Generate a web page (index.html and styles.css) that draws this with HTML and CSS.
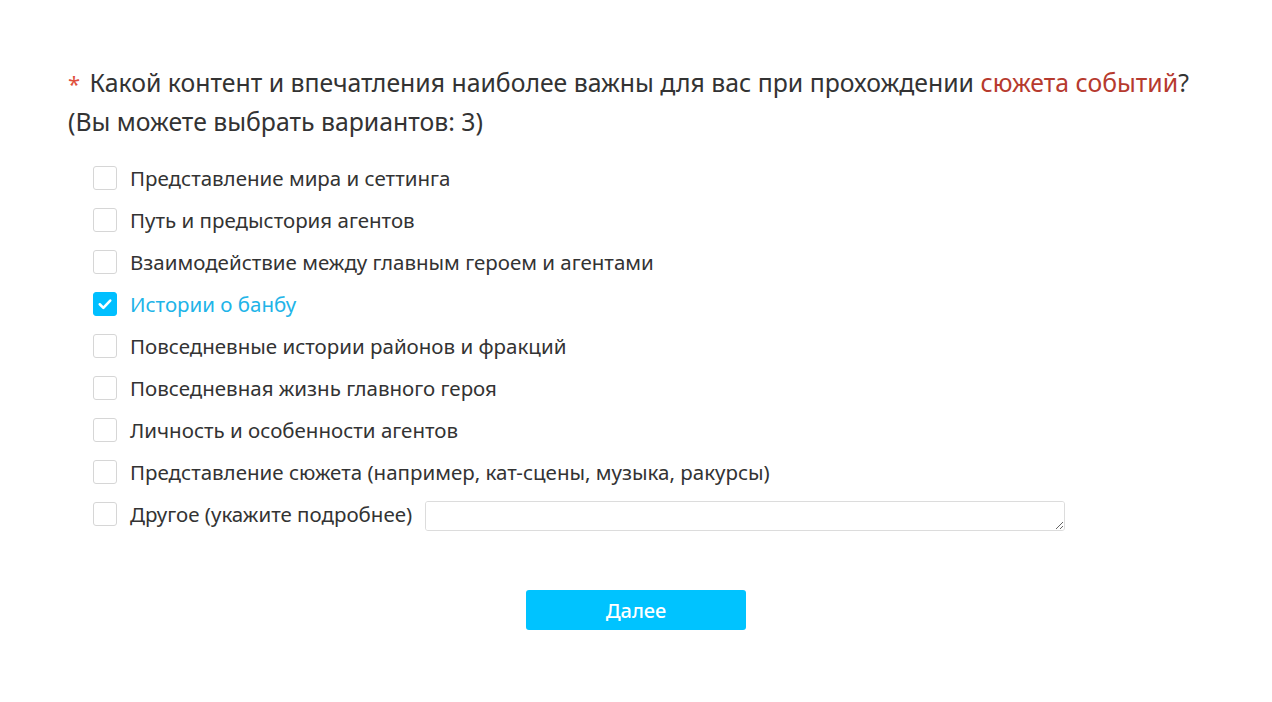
FILE: index.html
```html
<!DOCTYPE html>
<html lang="ru">
<head>
<meta charset="utf-8">
<link rel="stylesheet" href="styles.css">
</head>
<body>
<div class="page">
  <div class="question">
    <span class="req">*</span> Какой контент и впечатления наиболее важны для вас при прохождении <span class="hl">сюжета событий</span>?<br>(Вы можете выбрать вариантов: 3)
  </div>
  <ul class="options">
    <li class="opt"><span class="box"></span><span class="label">Представление мира и сеттинга</span></li>
    <li class="opt"><span class="box"></span><span class="label">Путь и предыстория агентов</span></li>
    <li class="opt"><span class="box"></span><span class="label">Взаимодействие между главным героем и агентами</span></li>
    <li class="opt checked"><span class="box"><svg viewBox="0 0 24 24" width="24" height="24"><path d="M6.3 12.3l3.9 3.9 7.5-8" fill="none" stroke="#fff" stroke-width="2.8" stroke-linecap="round" stroke-linejoin="round"/></svg></span><span class="label">Истории о банбу</span></li>
    <li class="opt"><span class="box"></span><span class="label">Повседневные истории районов и фракций</span></li>
    <li class="opt"><span class="box"></span><span class="label">Повседневная жизнь главного героя</span></li>
    <li class="opt"><span class="box"></span><span class="label">Личность и особенности агентов</span></li>
    <li class="opt"><span class="box"></span><span class="label">Представление сюжета (например, кат-сцены, музыка, ракурсы)</span></li>
    <li class="opt"><span class="box"></span><span class="label">Другое (укажите подробнее)</span><textarea class="other"></textarea></li>
  </ul>
  <div class="actions"><button class="next">Далее</button></div>
</div>
</body>
</html>
```
FILE: styles.css
```css
html, body { margin: 0; padding: 0; background: #fff; }
body { font-family: "Noto Sans", "Open Sans", sans-serif; color: #333; }
.page { padding: 63px 68px 0 68px; }
.question { font-size: 24.8px; line-height: 38px; color: #333; }
.req { color: #e0503c; font-size: 22px; margin-right: 3px; }
.hl { color: #b63a2e; }
.options { list-style: none; margin: 17px 0 0 0; padding: 0 0 0 25px; }
.opt { display: flex; align-items: center; height: 42px; font-size: 20.5px; }
.box { border: 1px solid #d6d6d6; border-radius: 3px; box-sizing: border-box; width: 24px; height: 24px; margin-right: 13px; flex: none; display: flex; align-items: center; justify-content: center; }
.checked .box { background: #00bfff; border-color: #00bfff; }
.checked .label { color: #21b4e8; }
.other { align-self: flex-start; margin: 8px 0 0 13px; width: 640px; height: 30px; box-sizing: border-box; border: 1px solid #dcdcdc; border-radius: 3px; resize: vertical; font: inherit; }
.actions { display: flex; justify-content: center; margin-top: 55px; }
.next { width: 220px; height: 40px; border: none; border-radius: 3px; background: #00c3ff; color: #fff; font-family: inherit; font-size: 20px; font-weight: 500; }
```
